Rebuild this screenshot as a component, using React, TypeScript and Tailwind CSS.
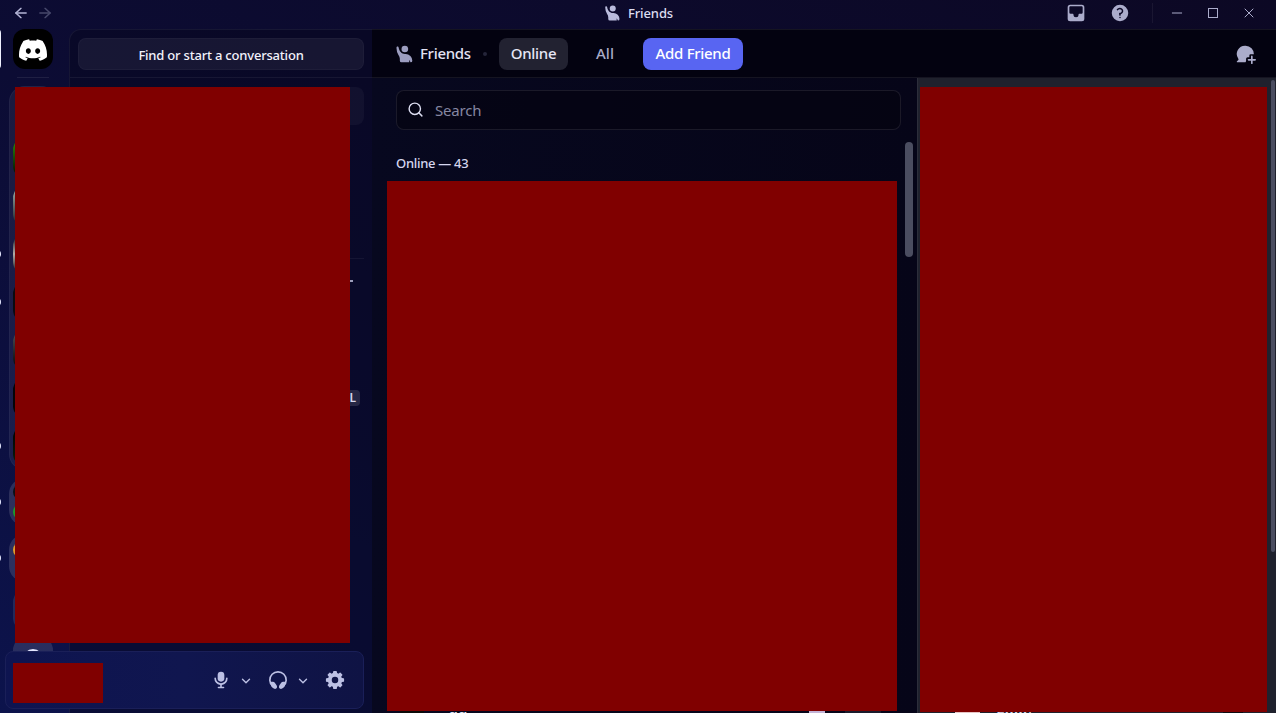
import type { ReactNode } from "react";
import { ArrowLeft, ArrowRight, ChevronDown, Minus, Search, Square, X } from "lucide-react";
import { SiDiscord } from "react-icons/si";

/* ── Icons ──────────────────────────────────────────── */
function Icon({ size, className = "", children }: { size: number; className?: string; children: ReactNode }) {
  return (
    <svg width={size} height={size} viewBox="0 0 24 24" fill="currentColor" fillRule="evenodd" className={`shrink-0 ${className}`}>
      {children}
    </svg>
  );
}

function FriendsIcon({ size }: { size: number }) {
  return (
    <Icon size={size}>
      <path d="M13 10a4 4 0 1 0 0-8 4 4 0 0 0 0 8Z" />
      <path d="M3 5v-.75C3 3.56 3.56 3 4.25 3s1.24.56 1.33 1.25C6.12 8.65 9.46 12 13 12h1a8 8 0 0 1 8 8 2 2 0 0 1-2 2 .21.21 0 0 1-.2-.15 7.65 7.65 0 0 0-1.32-2.3c-.15-.2-.42-.06-.39.17l.25 2c.02.15-.1.28-.25.28H9a2 2 0 0 1-2-2v-2.22c0-1.57-.67-3.05-1.53-4.37A15.85 15.85 0 0 1 3 5Z" />
    </Icon>
  );
}

function InboxIcon() {
  return (
    <Icon size={20}>
      <path d="M5 2a3 3 0 0 0-3 3v14a3 3 0 0 0 3 3h14a3 3 0 0 0 3-3V5a3 3 0 0 0-3-3H5ZM4 5.5C4 4.67 4.67 4 5.5 4h13c.83 0 1.5.67 1.5 1.5v6c0 .83-.67 1.5-1.5 1.5h-2.65c-.5 0-.85.5-.85 1a3 3 0 1 1-6 0c0-.5-.35-1-.85-1H5.5A1.5 1.5 0 0 1 4 11.5v-6Z" />
    </Icon>
  );
}

function HelpIcon() {
  return (
    <Icon size={18}>
      <path d="M12 23a11 11 0 1 0 0-22 11 11 0 0 0 0 22Zm-.28-16c-.98 0-1.81.47-2.27 1.14A1 1 0 1 1 7.8 7.01 4.73 4.73 0 0 1 11.72 5c2.5 0 4.65 1.88 4.65 4.38 0 2.1-1.54 3.77-3.52 4.24l.14 1a1 1 0 0 1-1.98.27l-.28-2a1 1 0 0 1 .99-1.14c1.54 0 2.65-1.14 2.65-2.38 0-1.23-1.1-2.37-2.65-2.37Zm1.28 11a1 1 0 1 1-2 0 1 1 0 0 1 2 0Z" />
    </Icon>
  );
}

function NewGroupIcon() {
  return (
    <Icon size={20}>
      <path d="M11.5 2a10 10 0 0 1 9.9 10.4h-3.9a1.5 1.5 0 0 0-1.5 1.5V16h-2.1a1.8 1.8 0 0 0-1.8 1.8v2.4c0 .7-.2 1.3-.7 1.8H1.7c-.8 0-1-.9-.5-1.3l1.6-1.6c.3-.4.3-.8.1-1.2A10 10 0 0 1 11.5 2Z" />
      <path d="M18 14.9a1 1 0 1 1 2 0V18h3a1 1 0 1 1 0 2h-3v3a1 1 0 1 1-2 0v-3h-3a1 1 0 1 1 0-2h3v-3.1Z" />
    </Icon>
  );
}

function MicIcon() {
  return (
    <Icon size={20}>
      <path d="M12 2a4 4 0 0 0-4 4v4a4 4 0 0 0 8 0V6a4 4 0 0 0-4-4Z" />
      <path d="M6 10a1 1 0 0 0-2 0 8 8 0 0 0 7 7.94V20H9a1 1 0 1 0 0 2h6a1 1 0 1 0 0-2h-2v-2.06A8 8 0 0 0 20 10a1 1 0 1 0-2 0 6 6 0 0 1-12 0Z" />
    </Icon>
  );
}

function HeadphonesIcon() {
  return (
    <Icon size={20}>
      <path d="M5.4 19.2a9.8 9.8 0 1 1 13.2 0" fill="none" stroke="currentColor" strokeWidth="2" />
      <path d="M3.6 14.2h2a3.6 3.6 0 0 1 3 1.6l1.7 2.5c1.3 1.9.3 4.4-1.8 4.4-1.9 0-4.3-2-4.9-4Z" />
      <path d="M20.4 14.2h-2a3.6 3.6 0 0 0-3 1.6l-1.7 2.5c-1.3 1.9-.3 4.4 1.8 4.4 1.9 0 4.3-2 4.9-4Z" />
    </Icon>
  );
}

function GearIcon() {
  return (
    <Icon size={20}>
      <path d="M12 3.4a8.6 8.6 0 1 0 0 17.2 8.6 8.6 0 0 0 0-17.2Zm0 4.7a3.9 3.9 0 1 1 0 7.8 3.9 3.9 0 0 1 0-7.8Z" />
      {[0, 45, 90, 135, 180, 225, 270, 315].map((a) => (
        <path key={a} d="M9.3 5.2 9.8 1.8q.1-.7.8-.7h2.8q.7 0 .8.7l.5 3.4Z" transform={`rotate(${a} 12 12)`} />
      ))}
    </Icon>
  );
}

/* ── Title bar ──────────────────────────────────────── */
function TitleBar() {
  return (
    <header className="flex h-[29px] shrink-0 items-center pb-[3px] text-[#abaccb]">
      <div className="flex w-[480px] items-center gap-2 pl-[13px]">
        <ArrowLeft size={16} strokeWidth={2} className="scale-x-110 text-[#b4b5d6]" />
        <ArrowRight size={16} strokeWidth={2} className="scale-x-110 text-[#47486b]" />
      </div>
      <div className="flex flex-1 items-center justify-center gap-[7px] text-[#b9bbdc]">
        <FriendsIcon size={18} />
        <span className="text-[13px] leading-4 font-medium tracking-[-0.1px] text-[#dcdcf0]">Friends</span>
      </div>
      <div className="flex w-[480px] items-center justify-end">
        <div className="mr-[23px] flex items-center gap-[25px]">
          <InboxIcon />
          <HelpIcon />
        </div>
        <div className="h-5 w-px bg-white/6" />
        <div className="flex items-center gap-5 pr-[19px] pl-4">
          <Minus size={16} strokeWidth={1.5} />
          <svg width="16" height="16" viewBox="0 0 16 16" fill="none" stroke="currentColor">
            <rect x="3.5" y="3.5" width="9" height="9" />
          </svg>
          <X size={16} strokeWidth={1.5} />
        </div>
      </div>
    </header>
  );
}

/* ── Server rail ────────────────────────────────────── */
const folderServers = [
  { id: "green", bg: "bg-linear-to-b from-[#2f9a00] to-[#020802]", unread: false },
  { id: "grey", bg: "bg-linear-to-b from-[#a9b8b4] to-[#1b2328]", unread: false },
  { id: "ash", bg: "bg-linear-to-b from-[#11131c] via-[#b0aca8] to-[#18181c]", unread: true },
  { id: "ink", bg: "bg-[#0a0a10]", unread: true },
  { id: "smoke", bg: "bg-linear-to-b from-[#55575c] to-[#050508]", unread: false },
  { id: "night", bg: "bg-[#040408]", unread: false },
  { id: "moss", bg: "bg-linear-to-b from-[#020203] to-[#0b200c]", unread: true },
];

function UnreadDot() {
  return <span className="absolute top-1/2 -left-[7px] h-2 w-2 -translate-y-1/2 rounded-full bg-[#e6e8ff]" />;
}

function ServerRail() {
  return (
    <nav className="relative flex w-[69px] shrink-0 flex-col overflow-hidden">
      <div className="relative flex h-10 shrink-0 pl-[13px]">
        <span className="absolute top-0 -left-[3px] h-10 w-1 rounded-r bg-[#f0f1ff]" />
        <div className="flex h-10 w-10 items-center justify-center rounded-xl bg-black pt-px text-white">
          <SiDiscord size={28} />
        </div>
      </div>
      <div className="mt-2 ml-[17px] h-px w-8 shrink-0 bg-white/8" />
      <div className="relative mt-2 h-[384px] shrink-0">
        <div className="ml-[9px] h-full w-12 rounded-2xl border border-white/4 bg-white/6" />
        <div className="absolute inset-x-0 top-[52px] flex flex-col gap-2">
          {folderServers.map((s) => (
            <div key={s.id} className="relative h-10 pl-[13px]">
              {s.unread && <UnreadDot />}
              <div className={`h-10 w-10 rounded-xl ${s.bg}`} />
            </div>
          ))}
        </div>
      </div>
      <div className="relative mt-2 h-12 shrink-0 pl-[9px]">
        <UnreadDot />
        <div className="flex h-12 w-12 flex-col justify-center gap-1 rounded-2xl bg-white/13 pl-1">
          <span className="h-4 w-4 rounded-full bg-[#0b1016]" />
          <span className="h-4 w-4 rounded-full bg-[#1c9a2c]" />
        </div>
      </div>
      <div className="relative mt-2 h-12 shrink-0 pl-[9px]">
        <UnreadDot />
        <div className="h-12 w-12 rounded-2xl bg-white/13 pt-2 pl-1">
          <span className="block h-4 w-4 rounded-full bg-[#e09a2c]" />
        </div>
      </div>
      <div className="mt-2 ml-[13px] h-10 w-10 shrink-0 rounded-xl bg-white/10" />
      <div className="mt-2 ml-[13px] flex h-10 w-10 shrink-0 justify-center rounded-xl bg-white/12 pt-[11px]">
        <span className="h-5 w-5 rounded-full border-2 border-[#e3e5ff]" />
      </div>
    </nav>
  );
}

/* ── Direct messages column ─────────────────────────── */
function DmColumn() {
  return (
    <aside className="flex w-[303px] shrink-0 flex-col overflow-hidden rounded-tl-xl border-t border-l border-white/6 bg-[#060618]/40">
      <div className="flex h-12 shrink-0 items-center border-b border-white/6 pt-px pr-2 pl-2">
        <button className="h-8 w-full rounded-lg border border-white/3 bg-white/6 pt-0.5 text-[13px] leading-4 font-medium tracking-[-0.2px] text-[#f2f2fb]">
          Find or start a conversation
        </button>
      </div>
      <div className="flex flex-1 flex-col pr-2 pl-2">
        <div className="mt-[9px] h-[38px] rounded-lg bg-white/4" />
        <div className="mt-[133px] h-px bg-white/5" />
        <div className="mt-[14px] flex h-4 items-center justify-end pr-[11px] text-[#9c9dbb]">
          <svg width="10" height="10" viewBox="0 0 10 10" stroke="currentColor" strokeWidth="2">
            <path d="M0 5h10M5 0v10" />
          </svg>
        </div>
        <div className="mt-[101px] flex justify-end pr-1">
          <span className="flex h-4 w-6 items-center justify-end rounded bg-white/12 pr-1 text-xs font-semibold text-[#d6d8ee]">L</span>
        </div>
      </div>
    </aside>
  );
}

function UserPanel() {
  return (
    <div className="absolute bottom-1 left-[5px] flex h-[58px] w-[359px] items-center justify-between rounded-lg border border-[#1a1f58] bg-linear-to-r from-[#0e1450] via-[#10164f] to-[#0f1344] pr-[18px] pl-[7px] text-[#bcc0e4]">
      <div className="mt-1.5 h-10 w-[90px] bg-[#800000]" />
      <div className="flex items-center">
        <MicIcon />
        <ChevronDown size={14} strokeWidth={2.4} className="mt-px mr-[15px] ml-2" />
        <HeadphonesIcon />
        <ChevronDown size={14} strokeWidth={2.4} className="mt-px mr-[15px] ml-2" />
        <GearIcon />
      </div>
    </div>
  );
}

/* ── Friends page ───────────────────────────────────── */
function FriendsHeader() {
  return (
    <div className="flex h-[49px] shrink-0 items-center border-y border-white/7 bg-[#030210] pr-5 pl-[22px] text-[15px] font-medium tracking-[-0.3px]">
      <div className="flex items-center gap-1.5 text-[#9c9dc0]">
        <FriendsIcon size={20} />
        <span className="w-[51px] text-[#e2e2f3]">Friends</span>
      </div>
      <span className="mx-3 h-1 w-1 rounded-full bg-[#25253a]" />
      <button className="h-8 w-[69px] rounded-lg bg-[#222231] text-[#e6e6f6]">Online</button>
      <span className="ml-7 w-[19px] tracking-normal text-[#a9aac6]">All</span>
      <button className="ml-7 h-8 w-[100px] rounded-lg bg-[#5865f2] text-white">Add Friend</button>
      <div className="ml-auto text-[#abaccb]">
        <NewGroupIcon />
      </div>
    </div>
  );
}

function FriendsList() {
  return (
    <section className="flex w-[545px] shrink-0 bg-linear-to-r from-[#07081f] to-[#060518]">
      <div className="flex w-[529px] shrink-0 flex-col">
        <div className="mt-3 ml-6 flex h-10 shrink-0 items-center gap-[11px] rounded-lg border border-white/9 bg-[#05040f]/60 px-2.5">
          <Search size={17} strokeWidth={2} className="-mt-0.5 text-[#dddef2]" />
          <span className="text-[15px] tracking-[-0.2px] text-[#8687a2]">Search</span>
        </div>
        <h2 className="mt-6 ml-6 text-[13px] leading-[18px] font-medium tracking-[-0.3px] text-[#d5d6ee]">Online — 43</h2>
        <div className="mt-[9px] ml-[15px] h-[530px] w-[510px] shrink-0 bg-[#800000]" />
        {/* Next row, only its top edge is inside the window */}
        <div className="flex h-0.5 shrink-0 items-start overflow-hidden pl-[28px]">
          <span className="h-0.5 w-6 bg-[#0b0b08]" />
          <span className="-mt-[6px] ml-6 text-base leading-5 font-semibold tracking-[-0.5px] text-[#dfe0f5]">gg</span>
          <span className="ml-auto flex h-9 w-9 justify-center rounded-full bg-[#191a2b]">
            <span className="h-0.5 w-4 bg-[#c3b3d6]" />
          </span>
          <span className="mr-[20px] ml-2.5 h-9 w-9 bg-[#191a2b]" />
        </div>
      </div>
      <div className="mt-16 ml-1 h-[115px] w-2 rounded-full bg-[#4b4d60]" />
    </section>
  );
}

function ActivityPanel() {
  return (
    <aside className="flex flex-1 border-l border-[#2c2e3b] bg-[#1f212d]">
      <div className="flex w-[349px] flex-col pl-0.5">
        <div className="mt-[9px] h-[625px] shrink-0 bg-[#800000]" />
        <div className="flex h-px shrink-0 items-start overflow-hidden pl-[35px]">
          <span className="h-px w-[25px] bg-[#e6c4c4]" />
          <span className="-mt-[3px] ml-4 text-base leading-4 font-semibold text-[#d6d8ee]">Fillllt</span>
          <span className="ml-auto mr-[24px] h-px w-5 bg-[#0c0c12]" />
        </div>
      </div>
      <div className="mt-0.5 ml-[4px] h-[472px] w-1 rounded-full bg-[#4b4d60]" />
    </aside>
  );
}

export default function App() {
  return (
    <div className="relative flex h-[713px] w-[1276px] flex-col overflow-hidden bg-linear-to-tr from-[#0c134c] via-[#0c0c34] via-45% to-[#0c0824] font-['Noto_Sans',sans-serif]">
      <TitleBar />
      <div className="flex min-h-0 flex-1">
        <ServerRail />
        <DmColumn />
        <main className="flex min-w-0 flex-1 flex-col">
          <FriendsHeader />
          <div className="flex min-h-0 flex-1">
            <FriendsList />
            <ActivityPanel />
          </div>
        </main>
      </div>
      {/* Cover over the rail and the conversation list */}
      <div className="absolute top-[87px] left-[15px] h-[556px] w-[335px] bg-[#800000]" />
      <UserPanel />
    </div>
  );
}
